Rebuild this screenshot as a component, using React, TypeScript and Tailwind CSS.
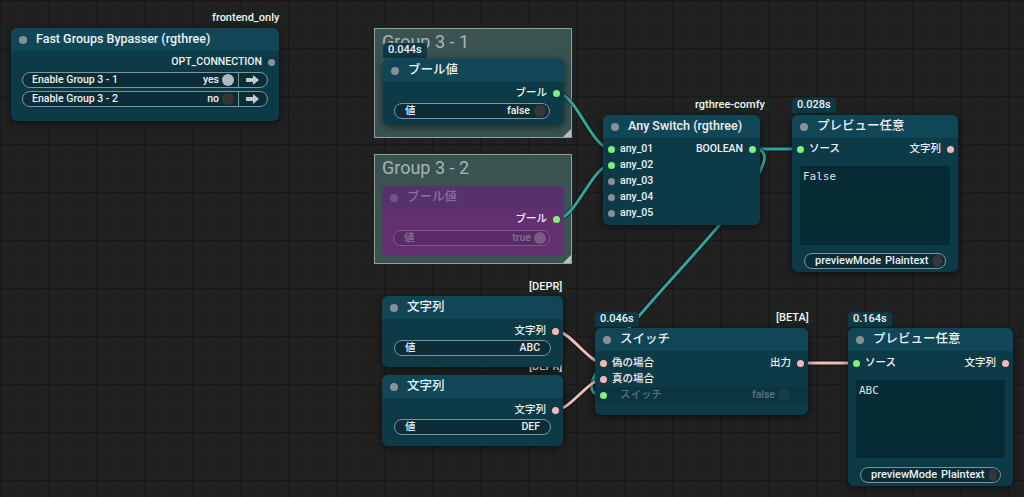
import React from "react";

function Dot({ c }: { c: string }) {
  return <span className={`inline-block w-[7px] h-[7px] rounded-full shrink-0 ${c}`} />;
}

function In({ label, dot, text = "text-[#eef2f3]" }: { label: string; dot: string; text?: string }) {
  return (
    <div className="h-4 flex items-center pl-[5px] gap-[5px]">
      <Dot c={dot} />
      <span className={text}>{label}</span>
    </div>
  );
}

function Out({ label, dot }: { label: string; dot: string }) {
  return (
    <div className="h-4 flex items-center justify-end pr-[4px] gap-[6px]">
      <span>{label}</span>
      <Dot c={dot} />
    </div>
  );
}

function Widget({
  label,
  value,
  knob,
  className = "",
}: {
  label: string;
  value: string;
  knob?: string;
  className?: string;
}) {
  return (
    <div
      className={`h-4 rounded-full border border-[#7c949b] bg-[#0a2d37] flex items-center gap-[4px] pl-[10px] ${
        knob ? "pr-[3px]" : "pr-[10px]"
      } ${className}`}>
      <span className="flex-1">{label}</span>
      <span>{value}</span>
      {knob && <span className={`w-[12px] h-[12px] rounded-full ${knob}`} />}
    </div>
  );
}

function Node({
  pos,
  title,
  children,
}: {
  pos: string;
  title: string;
  children?: React.ReactNode;
}) {
  return (
    <div
      className={`absolute rounded-[6px] overflow-hidden bg-[#0d3a47] shadow-[0_2px_8px_rgba(0,0,0,0.55)] ${pos}`}>
      <div className="h-[23px] flex items-center gap-[9px] pl-[8px] bg-[#114656] text-[12.5px] font-medium text-[#eef3f5]">
        <span className="w-[8px] h-[8px] rounded-full bg-[#8a9095]" />
        {title}
      </div>
      {children}
    </div>
  );
}

function Badge({ pos, text, dark }: { pos: string; text: string; dark?: boolean }) {
  return (
    <div
      className={`absolute h-[15px] px-[5px] flex items-center text-[11px] font-medium text-[#f2f4f5] ${
        dark ? "bg-[#1b241e] rounded-[2px]" : "bg-[#0d3a47] rounded-t-[4px]"
      } ${pos}`}>
      {text}
    </div>
  );
}

function Arrow() {
  return (
    <svg width="14" height="10" viewBox="0 0 14 10">
      <polygon points="0,3 7,3 7,0 13,5 7,10 7,7 0,7" fill="#c3cacd" />
    </svg>
  );
}

function ToggleRow({ label, value, knob }: { label: string; value: string; knob: string }) {
  return (
    <div className="h-4 mx-[11px] rounded-full border border-[#7c949b] bg-[#0a2d37] flex items-center pl-[9px]">
      <span className="flex-1">{label}</span>
      <span>{value}</span>
      <span className={`ml-[3px] mr-[4px] w-[12px] h-[12px] rounded-full ${knob}`} />
      <span className="h-full w-[29px] border-l border-[#7c949b] flex items-center justify-center">
        <Arrow />
      </span>
    </div>
  );
}

function Group({ pos, title }: { pos: string; title: string }) {
  return (
    <div className={`absolute bg-[#3a5351] border border-[#8ba2a0] ${pos}`}>
      <div className="pl-[7px] pt-[2px] text-[18px] leading-[22px] font-normal text-[#a3b6b4]">{title}</div>
      <div className="absolute right-0 bottom-0 w-0 h-0 border-l-[8px] border-l-transparent border-b-[8px] border-b-[#b3c4c3]" />
    </div>
  );
}

export default function App() {
  const teal = "#33a39b";
  const pink = "#edbdb8";
  return (
    <div className="relative w-[1024px] h-[497px] overflow-hidden bg-[#212121] font-['Roboto','Noto_Sans_CJK_JP',sans-serif] text-[10.5px] font-medium text-[#eef2f3] bg-[linear-gradient(#191919_1px,transparent_1px),linear-gradient(90deg,#191919_1px,transparent_1px),linear-gradient(#1d1d1d_1px,transparent_1px),linear-gradient(90deg,#1d1d1d_1px,transparent_1px)] bg-[size:48px_48px,48px_48px,12px_12px,12px_12px]">
      {/* groups */}
      <Group pos="left-[374px] top-[28px] w-[198px] h-[110px]" title="Group 3 - 1" />
      <Group pos="left-[374px] top-[154px] w-[198px] h-[110px]" title="Group 3 - 2" />

      {/* links */}
      <svg className="absolute inset-0" width="1024" height="497">
        <g fill="none" strokeLinecap="round">
          {[
            ["M557,93 C576,93 592,149 611,149", teal],
            ["M557,219 C576,219 592,165 611,165", teal],
            ["M753,149 L800,149", teal],
            ["M753,149 C825,149 531,395 603,395", teal],
            ["M556,331 C570,331 589,363 603,363", pink],
            ["M556,410 C570,410 589,379 603,379", pink],
            ["M801,363 L856,363", pink],
          ].map(([d, c], i) => (
            <g key={i}>
              <path d={d} stroke="rgba(0,0,0,0.45)" strokeWidth="5" />
              <path d={d} stroke={c} strokeWidth="3" />
            </g>
          ))}
        </g>
      </svg>

      {/* Fast Groups Bypasser */}
      <Badge pos="left-[207px] top-[11px]" text="frontend_only" dark />
      <Node pos="left-[11px] top-[28px] w-[268px] h-[93px]" title="Fast Groups Bypasser (rgthree)">
        <div className="pt-[3px]">
          <Out label="OPT_CONNECTION" dot="bg-[#8a9095]" />
        </div>
        <div className="flex flex-col gap-[3px] mt-[2px]">
          <ToggleRow label="Enable Group 3 - 1" value="yes" knob="bg-[#aeb8be]" />
          <ToggleRow label="Enable Group 3 - 2" value="no" knob="bg-[#343434]" />
        </div>
      </Node>

      {/* Group 3-1 node */}
      <Badge pos="left-[383px] top-[43px]" text="0.044s" />
      <Node pos="left-[383px] top-[59px] w-[181px] h-[66px]" title="ブール値">
        <div className="pt-[3px]">
          <Out label="ブール" dot="bg-[#7ef07e]" />
        </div>
        <Widget label="値" value="false" knob="bg-[#363636]" className="ml-[11px] mr-[14px] mt-[2px]" />
      </Node>

      {/* Group 3-2 bypassed node */}
      <div className="absolute left-[382px] top-[186px] w-[182px] h-[70px] rounded-[6px] overflow-hidden bg-[#63306f]">
        <div className="h-[23px] flex items-center gap-[9px] pl-[8px] bg-[#56316b] text-[12.5px] font-medium text-[#88709a]">
          <span className="w-[8px] h-[8px] rounded-full bg-[#75567f]" />
          ブール値
        </div>
        <div className="pt-[2px]">
          <Out label="ブール" dot="bg-[#7ef07e]" />
        </div>
        <div className="h-4 ml-[11px] mr-[14px] mt-[3px] rounded-full border border-[#7b5a87] bg-[#582a66] flex items-center pl-[10px] pr-[3px] text-[#8c7097]">
          <span className="flex-1">値</span>
          <span>true</span>
          <span className="ml-[3px] w-[12px] h-[12px] rounded-full bg-[#7b5a87]" />
        </div>
      </div>

      {/* Any Switch */}
      <Badge pos="left-[690px] top-[98px]" text="rgthree-comfy" dark />
      <Node pos="left-[603px] top-[115px] w-[157px] h-[110px]" title="Any Switch (rgthree)">
        <div className="relative pt-[3px]">
          <In label="any_01" dot="bg-[#7ef07e]" />
          <In label="any_02" dot="bg-[#7ef07e]" />
          <In label="any_03" dot="bg-[#8a9095]" />
          <In label="any_04" dot="bg-[#8a9095]" />
          <In label="any_05" dot="bg-[#8a9095]" />
          <div className="absolute right-0 top-[3px] w-[100px]">
            <Out label="BOOLEAN" dot="bg-[#7ef07e]" />
          </div>
        </div>
      </Node>

      {/* Preview top */}
      <Badge pos="left-[792px] top-[98px]" text="0.028s" />
      <Node pos="left-[792px] top-[115px] w-[166px] h-[157px]" title="プレビュー任意">
        <div className="pt-[3px] flex justify-between">
          <In label="ソース" dot="bg-[#7ef07e]" />
          <Out label="文字列" dot="bg-[#f2b9b6]" />
        </div>
        <div className="mx-[8px] mt-[9px] h-[79px] bg-[#072b35] px-[3px] pt-[3px] font-['DejaVu_Sans_Mono',monospace] font-normal text-[11px] text-[#dfe5e7]">
          False
        </div>
        <Widget label="previewMode" value="Plaintext" knob="bg-[#363636]" className="mx-[12px] mt-[8px] text-[11px]" />
      </Node>

      {/* 文字列 nodes */}
      <Badge pos="left-[524px] top-[280px]" text="[DEPR]" dark />
      <Badge pos="left-[524px] top-[360px]" text="[DEPR]" dark />
      <Node pos="left-[382px] top-[296px] w-[181px] h-[71px]" title="文字列">
        <div className="pt-[4px]">
          <Out label="文字列" dot="bg-[#f2b9b6]" />
        </div>
        <Widget label="値" value="ABC" className="ml-[12px] mr-[12px] mt-[1px]" />
      </Node>
      <Node pos="left-[382px] top-[375px] w-[181px] h-[71px]" title="文字列">
        <div className="pt-[4px]">
          <Out label="文字列" dot="bg-[#f2b9b6]" />
        </div>
        <Widget label="値" value="DEF" className="ml-[12px] mr-[12px] mt-[1px]" />
      </Node>

      {/* スイッチ */}
      <Badge pos="left-[595px] top-[312px]" text="0.046s" />
      <Badge pos="left-[771px] top-[311px]" text="[BETA]" dark />
      <Node pos="left-[595px] top-[328px] w-[213px] h-[87px]" title="スイッチ">
        <div className="relative pt-[4px]">
          <In label="偽の場合" dot="bg-[#f2b9b6]" />
          <In label="真の場合" dot="bg-[#f2b9b6]" />
          <div className="h-4 flex items-center pl-[5px] bg-[#0c3541]">
            <Dot c="bg-[#7ef07e]" />
            <span className="ml-[13px] flex-1 text-[#56747c]">スイッチ</span>
            <span className="text-[#56747c]">false</span>
            <span className="ml-[3px] mr-[18px] w-[12px] h-[12px] rounded-full bg-[#123e4a]" />
          </div>
          <div className="absolute right-0 top-[4px] w-[80px]">
            <Out label="出力" dot="bg-[#f2b9b6]" />
          </div>
        </div>
      </Node>

      {/* Preview bottom */}
      <Badge pos="left-[848px] top-[312px]" text="0.164s" />
      <Node pos="left-[848px] top-[328px] w-[165px] h-[158px]" title="プレビュー任意">
        <div className="pt-[4px] flex justify-between">
          <In label="ソース" dot="bg-[#7ef07e]" />
          <Out label="文字列" dot="bg-[#f2b9b6]" />
        </div>
        <div className="mx-[8px] mt-[9px] h-[78px] bg-[#072b35] px-[3px] pt-[3px] font-['DejaVu_Sans_Mono',monospace] font-normal text-[11px] text-[#dfe5e7]">
          ABC
        </div>
        <Widget label="previewMode" value="Plaintext" knob="bg-[#363636]" className="mx-[12px] mt-[9px] text-[11px]" />
      </Node>
    </div>
  );
}
